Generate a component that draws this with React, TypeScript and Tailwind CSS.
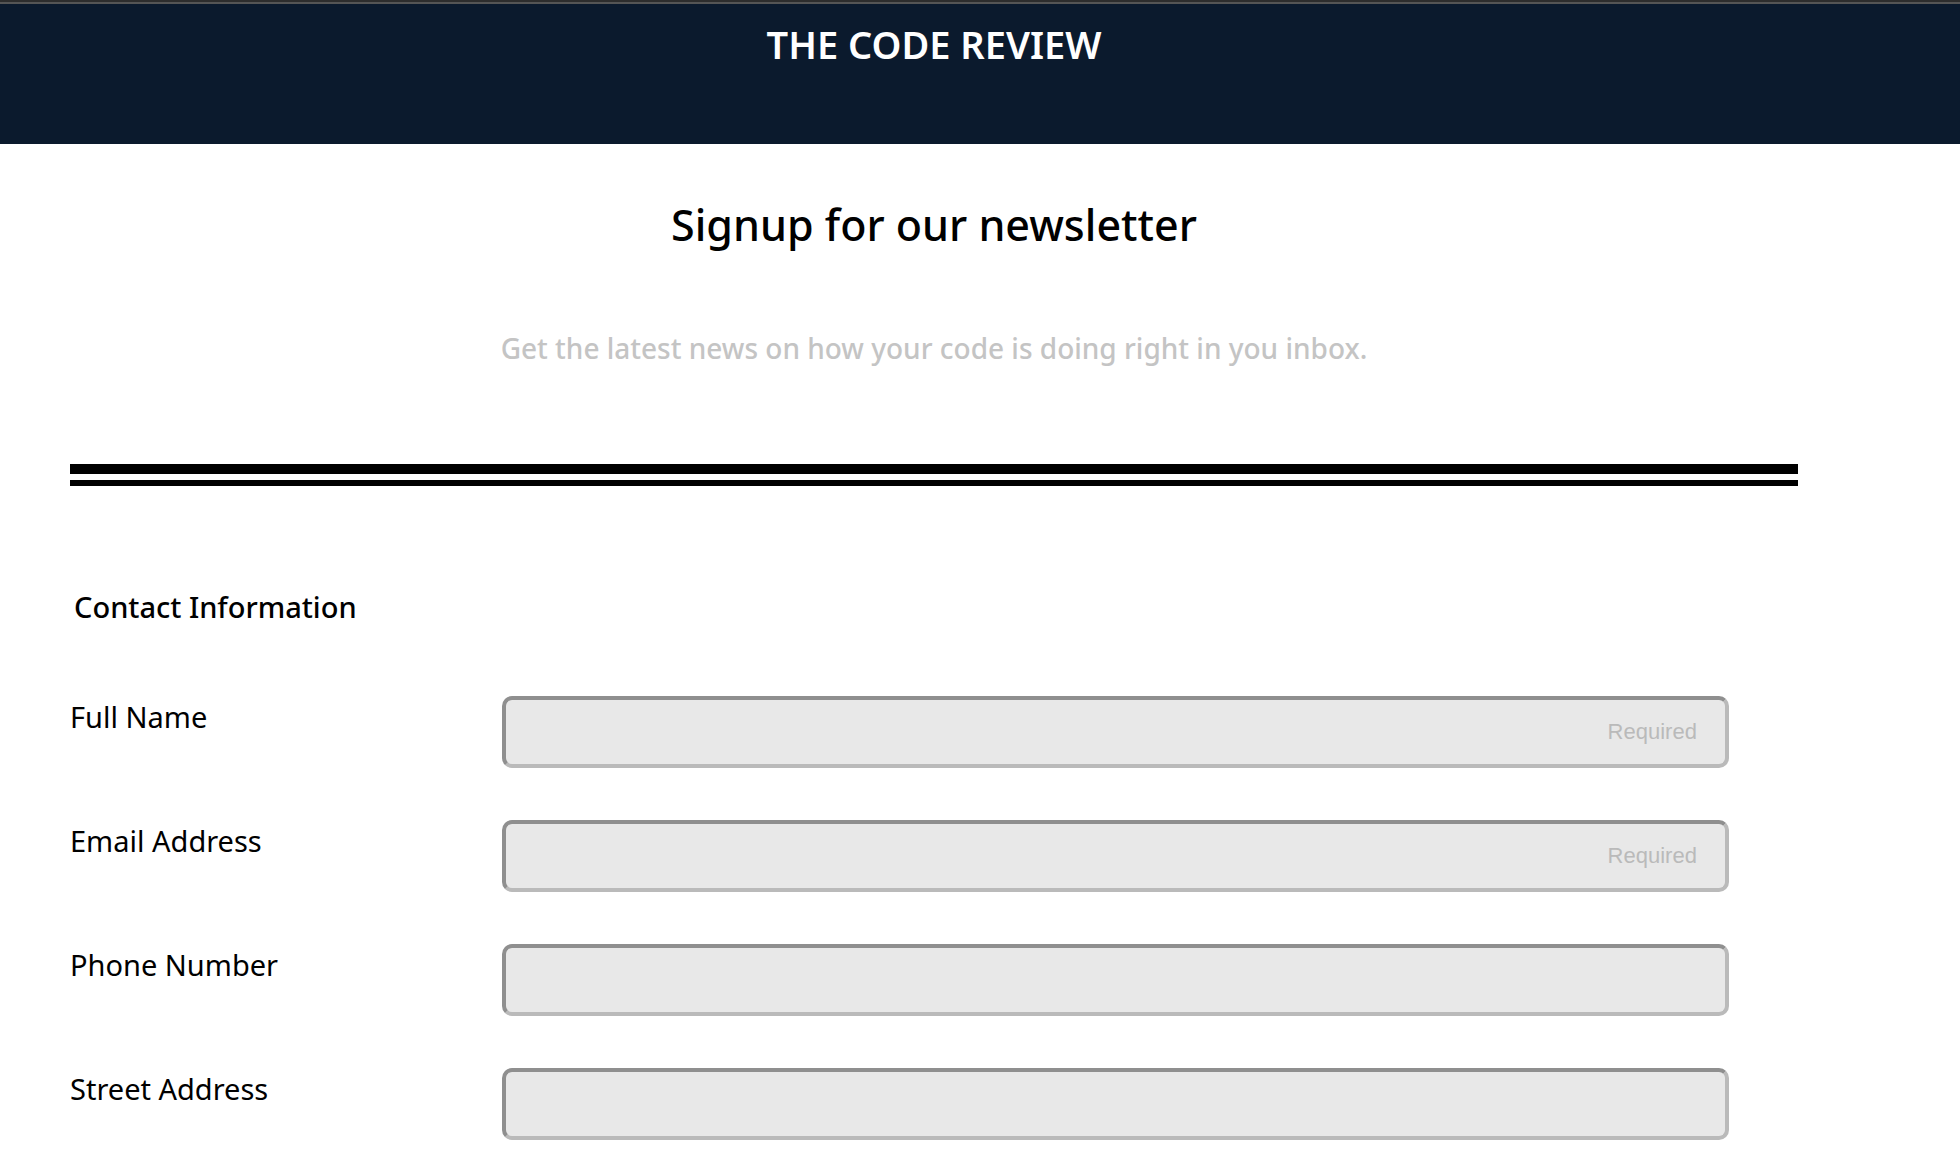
type Field = {
  id: string;
  label: string;
  type: string;
  required?: boolean;
};

const fields: Field[] = [
  { id: "full-name", label: "Full Name", type: "text", required: true },
  { id: "email", label: "Email Address", type: "email", required: true },
  { id: "phone", label: "Phone Number", type: "tel" },
  { id: "street", label: "Street Address", type: "text" },
];

function FieldRow({ id, label, type, required }: Field) {
  return (
    <div className="grid grid-cols-[25%_71%] items-start">
      <label htmlFor={id} className="text-[29px] leading-[42px]">
        {label}
      </label>
      <input
        id={id}
        name={id}
        type={type}
        required={required}
        placeholder={required ? "Required" : undefined}
        className="h-18 w-full rounded-[10px] border-4 border-t-[#8f8f8f] border-r-[#bababa] border-b-[#bababa] border-l-[#8f8f8f] bg-[#e8e8e8] px-7 text-right font-['Liberation_Sans',sans-serif] text-[22px] text-black placeholder:text-[#bababa]"
      />
    </div>
  );
}

export default function App() {
  return (
    <div className="bg-white font-['Noto_Sans',sans-serif] text-black">
      <div className="h-1 border-b-2 border-[#555555] bg-[#2d2d2d]" />
      <header className="bg-[#0b1a2d] pt-4 pr-[92px] pb-[76px]">
        <h1 className="text-center text-[38px] leading-[48px] font-semibold text-white">
          THE CODE REVIEW
        </h1>
      </header>
      <main className="pt-[53px] pr-[162px] pb-6 pl-[70px]">
        <h2 className="text-center text-[43px] leading-[56px] font-medium">
          Signup for our newsletter
        </h2>
        <p className="mt-[74px] text-center text-[28px] leading-[42px] font-medium text-[#c4c4c4]">
          Get the latest news on how your code is doing right in you inbox.
        </p>
        <div className="mt-[95px] h-[22px] border-t-[10px] border-b-[6px] border-black" />
        <form className="mt-[100px]">
          <h3 className="pl-1 text-[29px] leading-[42px] font-medium">Contact Information</h3>
          <div className="mt-[68px] flex flex-col gap-[52px]">
            {fields.map((field) => (
              <FieldRow key={field.id} {...field} />
            ))}
          </div>
        </form>
      </main>
    </div>
  );
}
